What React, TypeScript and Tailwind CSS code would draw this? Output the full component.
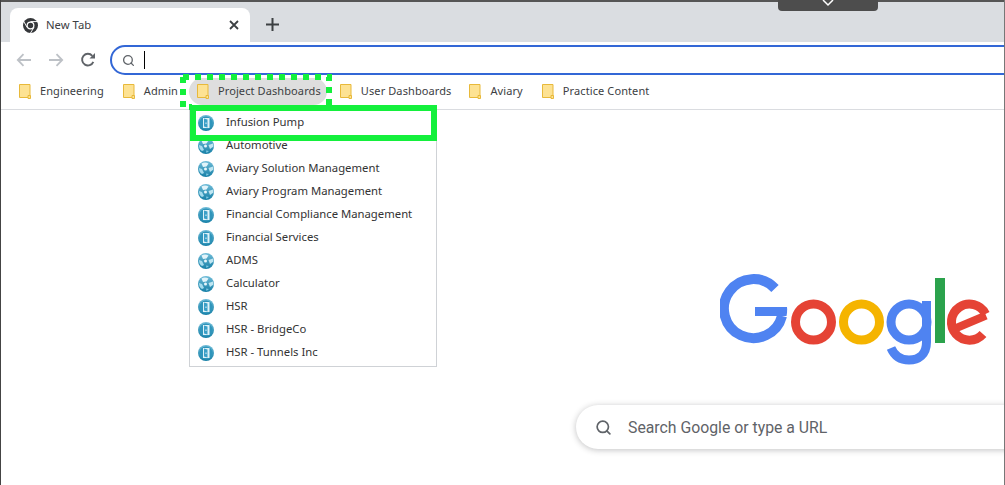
import { Search } from "lucide-react";

const bookmarks = [
  { label: "Engineering", className: "pl-[18px] pr-[19px]" },
  { label: "Admin", className: "pr-[11px]" },
  { label: "Project Dashboards", className: "bg-[#dedede] rounded-full pl-[8px] pr-[6px] mr-[13px]" },
  { label: "User Dashboards", className: "pr-[18px]" },
  { label: "Aviary", className: "pr-[19px]" },
  { label: "Practice Content", className: "" },
];

const menuItems = [
  { label: "Infusion Pump", kind: "door" },
  { label: "Automotive", kind: "globe" },
  { label: "Aviary Solution Management", kind: "globe" },
  { label: "Aviary Program Management", kind: "globe" },
  { label: "Financial Compliance Management", kind: "door" },
  { label: "Financial Services", kind: "door" },
  { label: "ADMS", kind: "globe" },
  { label: "Calculator", kind: "globe" },
  { label: "HSR", kind: "door" },
  { label: "HSR - BridgeCo", kind: "door" },
  { label: "HSR - Tunnels Inc", kind: "door" },
];

const Folder = () => (
  <svg width="12" height="15" viewBox="0 0 12 15" className="shrink-0">
    <path d="M.5.5h10.500v13H.5z" fill="#fde293" stroke="#e8b93a" />
    <path d="M9 11.500h2.500v3H9z" fill="#fde293" stroke="#e8b93a" />
  </svg>
);

const ItemIcon = ({ kind }: { kind: string }) => (
  <svg width="16" height="16" viewBox="0 0 16 16" className="shrink-0">
    <defs>
      <linearGradient id="orb" x1="0" y1="0" x2="0" y2="1">
        <stop offset="0" stopColor="#6fbcd8" />
        <stop offset="1" stopColor="#167fa6" />
      </linearGradient>
    </defs>
    <circle cx="8" cy="8" r="8" fill="url(#orb)" />
    {kind === "door" ? (
      <>
        <circle cx="8" cy="8" r="6.500" fill="#2f95bb" />
        <path d="M5 3h6.500v10H5z" fill="#dff2f8" />
        <path d="M6 3.500l3.500 1v8l-3.500-1z" fill="#3a9fc7" />
        <path d="M7.500 7.500h1v1.500h-1z" fill="#dff2f8" />
      </>
    ) : (
      <>
        <path d="M3.500 2.500c2-1.500 5-1.500 7 0L8.500 5.500 5 6z" fill="#e2f4fa" />
        <path d="M10.500 7l4.500-1.500.5 3L12 11z" fill="#bfe6f2" />
        <path d="M1 7l3 1 2 4-2 1C2 12 1 10 1 7z" fill="#a6dcee" />
        <path d="M8 12.500l3 .5-2.500 2z" fill="#7fc8e2" />
        <circle cx="7.500" cy="8" r="1.500" fill="#e8f6fb" />
      </>
    )}
  </svg>
);

const GoogleLogo = () => (
  <svg width="272" height="92" viewBox="0 0 272 92" className="shrink-0">
    <g fill="none" strokeWidth="10">
      <path d="M55 14.500A29.500 29.500 0 1 0 62 42" stroke="#4f83f1" />
      <circle cx="93.500" cy="48" r="18" stroke="#e54335" strokeWidth="9" />
      <circle cx="141.500" cy="48" r="18" stroke="#f5b400" strokeWidth="9" />
      <circle cx="189" cy="48" r="18" stroke="#4f83f1" strokeWidth="9" />
      <path d="M206.500 27V68C206.500 81 198 86 189 86C180 86 174 81 171 74" stroke="#4f83f1" strokeWidth="9" />
      <path d="M234 55L266 41.500" stroke="#e54335" strokeWidth="8" />
      <path d="M265.500 40A18 18 0 1 0 263 60" stroke="#e54335" strokeWidth="9" />
    </g>
    <path d="M35 33h32q.5 4-.5 9H35z" fill="#4f83f1" />
    <path d="M215 4h10v65h-10z" fill="#2ba24c" />
  </svg>
);

export default function App() {
  return (
    <div className="relative flex flex-col w-[1005px] h-[485px] overflow-hidden bg-white border-l border-r border-l-[#444] border-r-[#777] font-['Noto_Sans',sans-serif]">
      {/* Tab strip */}
      <div className="flex items-end h-[42px] pl-[9px] bg-[#dadde1] border-t-2 border-[#555] shrink-0">
        <div className="flex items-center w-[240px] h-[34px] pl-[13px] pr-[10px] bg-white rounded-t-lg">
          <svg width="15" height="15" viewBox="0 0 16 16" className="shrink-0">
            <circle cx="8" cy="8" r="8" fill="#35373a" />
            <circle cx="8" cy="8" r="4.200" fill="#fff" />
            <circle cx="8" cy="8" r="2.900" fill="#35373a" />
            <path d="M8 3.800h7M4.400 10.100L1 4M11.600 10.100L8 16" stroke="#fff" strokeWidth="1" />
          </svg>
          <span className="ml-[8px] text-[11.300px] text-[#3c4043]">New Tab</span>
          <svg width="10" height="10" viewBox="0 0 10 10" className="ml-auto mr-[1px]">
            <path d="M1 1l8 8M9 1l-8 8" stroke="#3c4043" strokeWidth="1.800" />
          </svg>
        </div>
        <svg width="13" height="13" viewBox="0 0 13 13" className="ml-[16px] mb-[11px]">
          <path d="M6.500 0v13M0 6.500h13" stroke="#3c4043" strokeWidth="2" />
        </svg>
      </div>

      {/* Toolbar */}
      <div className="flex items-center h-[36px] pl-[15px] shrink-0">
        <svg width="16" height="14" viewBox="0 0 16 14" className="shrink-0">
          <path d="M15 7H2M7.500 1.200L1.800 7l5.700 5.800" fill="none" stroke="#bdc1c6" strokeWidth="1.800" />
        </svg>
        <svg width="16" height="14" viewBox="0 0 16 14" className="ml-[16px] shrink-0">
          <path d="M1 7h13M8.500 1.200L14.200 7l-5.700 5.800" fill="none" stroke="#bdc1c6" strokeWidth="1.800" />
        </svg>
        <svg width="16" height="16" viewBox="0 0 16 16" className="ml-[16px] shrink-0">
          <path d="M13.300 9.800A5.800 5.800 0 1 1 12.300 3.800" fill="none" stroke="#5f6368" strokeWidth="1.900" />
          <path d="M9.500 6.500H15V1z" fill="#5f6368" />
        </svg>
        <div className="flex items-center flex-1 h-[30px] ml-[14px] -mr-8 pl-[10px] border-2 border-[#3367d6] rounded-full">
          <Search size={13} strokeWidth={2.400} className="text-[#5f6368]" />
          <div className="w-px h-[18px] ml-[9px] bg-black" />
        </div>
      </div>

      {/* Bookmarks bar */}
      <div className="flex items-center h-[32px] text-[11px] tracking-[0.1px] text-[#3c4043] border-b border-[#dadce0] shrink-0">
        {bookmarks.map((b) => (
          <div key={b.label} className={`flex items-center h-[27px] mb-[4px] ${b.className}`}>
            <Folder />
            <span className="ml-[9px]">{b.label}</span>
          </div>
        ))}
      </div>

      {/* New tab page */}
      <div className="flex flex-col flex-1 items-start">
        <div className="ml-[719px] mt-[164px]">
          <GoogleLogo />
        </div>
        <div className="flex items-center w-[480px] h-[44px] ml-[575px] mt-[39px] pl-[19px] bg-white rounded-full shadow-[0_1px_6px_rgba(32,33,36,0.28)] shrink-0">
          <Search size={17} strokeWidth={2.400} className="text-[#5f6368]" />
          <span className="ml-[16px] pt-[1px] text-[15.800px] text-[#5f6368] font-['Roboto',sans-serif]">Search Google or type a URL</span>
        </div>
      </div>

      {/* Tab search notch */}
      <div className="absolute top-0 left-[777px] flex justify-center w-[100px] h-[11px] bg-[#4d4d4d] rounded-b-sm">
        <svg width="12" height="7" viewBox="0 0 12 7">
          <path d="M1 0l5 5 5-5" fill="none" stroke="#fff" strokeWidth="1.500" />
        </svg>
      </div>

      {/* Bookmark folder menu */}
      <div className="absolute top-[110px] left-[188px] w-[248px] pb-[2px] bg-white border border-[#cfd2d6] flex flex-col text-[11.300px] text-[#333]">
        {menuItems.map((item) => (
          <div key={item.label} className="flex items-center h-[23px] pl-[8px] gap-[12px]">
            <ItemIcon kind={item.kind} />
            <span>{item.label}</span>
          </div>
        ))}
      </div>

      {/* Green annotations */}
      <div className="absolute top-[105px] left-[189px] w-[247px] h-[36px] border-[6px] border-[#14f03c]" />
      <svg width="154" height="36" viewBox="0 0 154 36" className="absolute top-[74px] left-[179px]">
        <path d="M3 3H149V33M3 3V33H12" fill="none" stroke="#14f03c" strokeWidth="6" strokeDasharray="6 6" />
      </svg>
    </div>
  );
}
